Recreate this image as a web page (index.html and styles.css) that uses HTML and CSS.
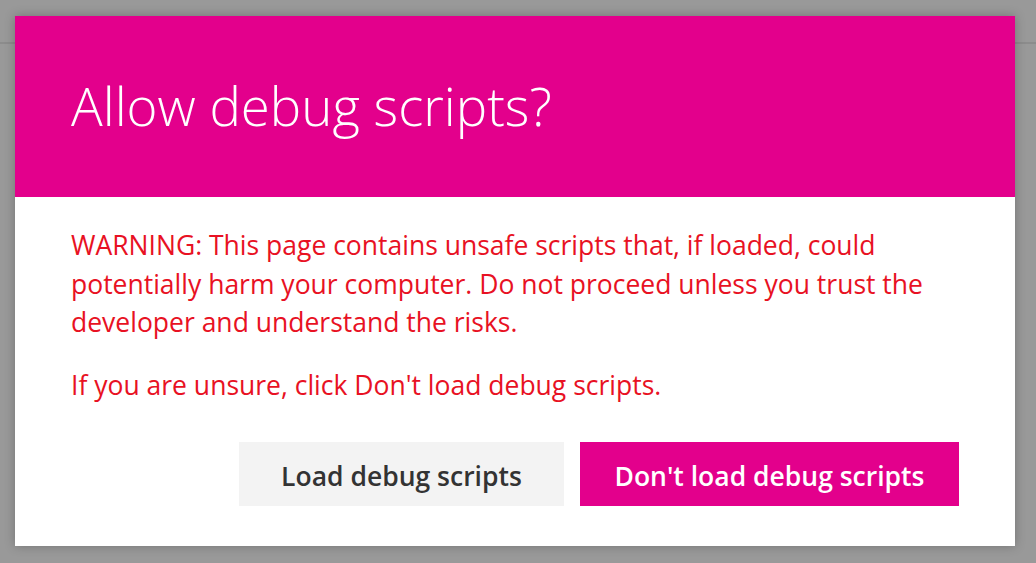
FILE: index.html
```html
<!DOCTYPE html>
<html lang="en">
<head>
<meta charset="utf-8">
<title>Allow debug scripts?</title>
<link rel="stylesheet" href="styles.css">
</head>
<body>
<div class="backdrop">
  <div class="topbar"></div>
  <div class="dialog" role="dialog" aria-labelledby="dlg-title">
    <div class="dialog-header">
      <h1 id="dlg-title" class="dialog-title">Allow debug scripts?</h1>
    </div>
    <div class="dialog-body">
      <p class="warning">WARNING: This page contains unsafe scripts that, if loaded, could potentially harm your computer. Do not proceed unless you trust the developer and understand the risks.</p>
      <p class="warning">If you are unsure, click Don't load debug scripts.</p>
      <div class="actions">
        <button class="btn btn-secondary">Load debug scripts</button>
        <button class="btn btn-primary">Don't load debug scripts</button>
      </div>
    </div>
  </div>
</div>
</body>
</html>
```
FILE: styles.css
```css
html, body {
  margin: 0;
  padding: 0;
  height: 100%;
}
body {
  background: #999999;
  font-family: "Open Sans", "Noto Sans", sans-serif;
  overflow: hidden;
}
.backdrop {
  position: relative;
  height: 100%;
}
.topbar {
  height: 42px;
  border-bottom: 2px solid #8c8c8c;
}
.dialog {
  position: absolute;
  left: 15px;
  top: 16px;
  width: 1000px;
  height: 530px;
  background: #ffffff;
  box-shadow: 0 0 10px rgba(0, 0, 0, 0.25);
  display: flex;
  flex-direction: column;
}
.dialog-header {
  background: #e3008c;
  height: 181px;
  box-sizing: border-box;
  padding: 0 56px;
  display: flex;
  align-items: center;
}
.dialog-title {
  margin: 0;
  color: #ffffff;
  font-weight: 300;
  font-size: 52.8px;
  line-height: 1;
}
.dialog-body {
  padding: 29px 56px 40px 56px;
  flex: 1;
  display: flex;
  flex-direction: column;
}
.warning {
  margin: 0 0 24px 0;
  color: #e81123;
  font-size: 26.5px;
  line-height: 38.5px;
}
.actions {
  margin-top: auto;
  display: flex;
  justify-content: flex-end;
  gap: 16px;
}
.btn {
  height: 64px;
  border: none;
  font-family: inherit;
  font-size: 26.5px;
  font-weight: 600;
  padding: 3px 0 0 0;
  cursor: pointer;
}
.btn-secondary {
  width: 325px;
  background: #f3f3f3;
  color: #333333;
}
.btn-primary {
  width: 379px;
  background: #e3008c;
  color: #ffffff;
}
```
